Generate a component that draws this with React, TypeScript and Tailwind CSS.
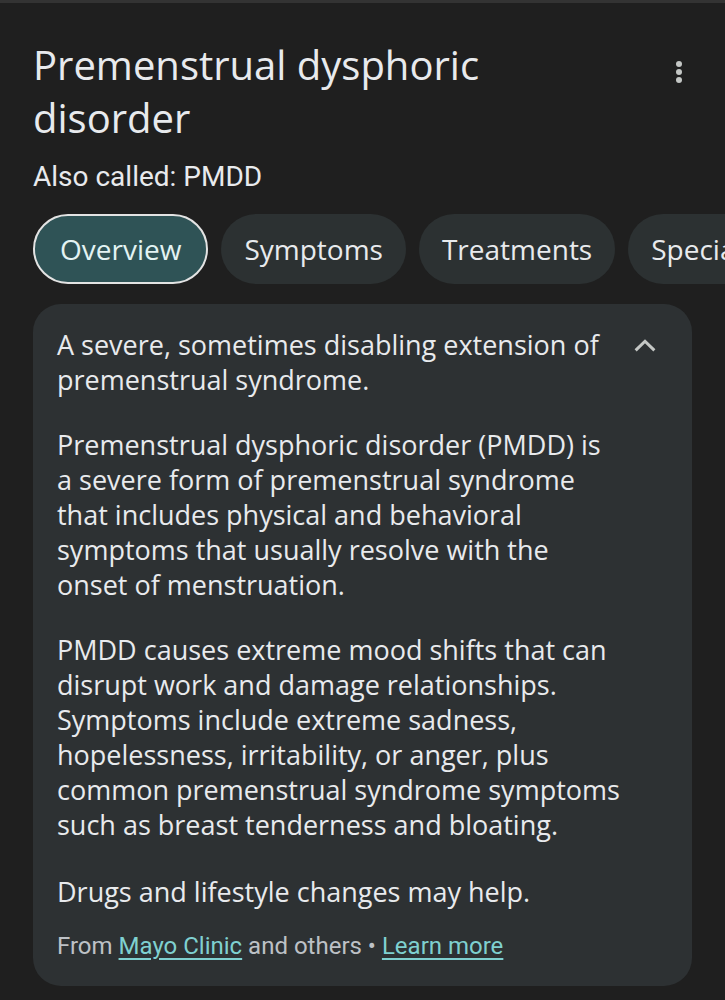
import React from "react";

const body = { fontFamily: '"Open Sans", "Noto Sans", sans-serif' };

const Lines = ({ lines }: { lines: string[] }) => (
  <>
    {lines.map((l, i) => (
      <span key={i} className="block whitespace-nowrap">
        {l}
      </span>
    ))}
  </>
);

export default function App() {
  return (
    <div className="min-h-[1000px] w-[725px] bg-[#1f1f1f] overflow-hidden">
      <div className="h-[3px] bg-[#333333]" />
      <div className="pl-[33px] pt-[35px]">
        <div className="flex items-start">
          <h1
            className="flex-1 text-[40px] leading-[53px] text-[#e8eaed]"
            style={body}
          >
            Premenstrual dysphoric
            <br />
            disorder
          </h1>
          <div className="mr-[43px] mt-[23px] flex flex-col gap-[2px]">
            <span className="block w-[6px] h-[6px] rounded-full bg-[#c4c7c5]" />
            <span className="block w-[6px] h-[6px] rounded-full bg-[#c4c7c5]" />
            <span className="block w-[6px] h-[6px] rounded-full bg-[#c4c7c5]" />
          </div>
        </div>
        <div
          className="mt-[15px] text-[28px] leading-[36px] text-[#e8eaed]"
          style={{ fontFamily: 'Roboto, sans-serif' }}
        >
          Also called: PMDD
        </div>
        <div className="mt-[19px] flex gap-[13px] whitespace-nowrap" style={body}>
          <div className="h-[70px] px-[25px] flex items-center rounded-full border-2 border-[#e3e3e3] bg-[#2f5356] text-[28px] text-[#e3f3f3]">
            Overview
          </div>
          <div className="h-[70px] px-[23px] flex items-center rounded-full bg-[#2c3132] text-[28px] text-[#e8eaed]">
            Symptoms
          </div>
          <div className="h-[70px] px-[23px] flex items-center rounded-full bg-[#2c3132] text-[28px] text-[#e8eaed]">
            Treatments
          </div>
          <div className="h-[70px] px-[23px] flex items-center rounded-full bg-[#2c3132] text-[28px] text-[#e8eaed]">
            Specialists
          </div>
        </div>
        <div className="mt-[20px] w-[659px] rounded-[28px] bg-[#2d3133] pl-[24px] pr-[24px] pt-[23px] pb-[24px]">
          <div className="flex items-start text-[27px] leading-[35px] text-[#e8eaed]" style={body}>
            <p className="flex-1">
              <Lines lines={["A severe, sometimes disabling extension of", "premenstrual syndrome."]} />
            </p>
            <svg width="30" height="30" viewBox="0 0 24 24" className="mt-[4px] mr-[8px] shrink-0">
              <path d="M4.5 15.5 L12 8.2 L19.5 15.5" fill="none" stroke="#c4c7c5" strokeWidth="2.4" />
            </svg>
          </div>
          <div className="text-[27px] leading-[35px] text-[#e8eaed]" style={body}>
            <p className="mt-[30px]">
              <Lines
                lines={[
                  "Premenstrual dysphoric disorder (PMDD) is",
                  "a severe form of premenstrual syndrome",
                  "that includes physical and behavioral",
                  "symptoms that usually resolve with the",
                  "onset of menstruation.",
                ]}
              />
            </p>
            <p className="mt-[30px]">
              <Lines
                lines={[
                  "PMDD causes extreme mood shifts that can",
                  "disrupt work and damage relationships.",
                  "Symptoms include extreme sadness,",
                  "hopelessness, irritability, or anger, plus",
                  "common premenstrual syndrome symptoms",
                  "such as breast tenderness and bloating.",
                ]}
              />
            </p>
            <p className="mt-[32px]">Drugs and lifestyle changes may help.</p>
          </div>
          <div
            className="mt-[21px] text-[24px] leading-[32px] text-[#bdc1c6]"
            style={{ fontFamily: 'Roboto, sans-serif' }}
          >
            From <span className="text-[#7fd0d0] underline underline-offset-[4px]">Mayo Clinic</span> and others •{" "}
            <span className="text-[#7fd0d0] underline underline-offset-[4px]">Learn more</span>
          </div>
        </div>
      </div>
    </div>
  );
}
